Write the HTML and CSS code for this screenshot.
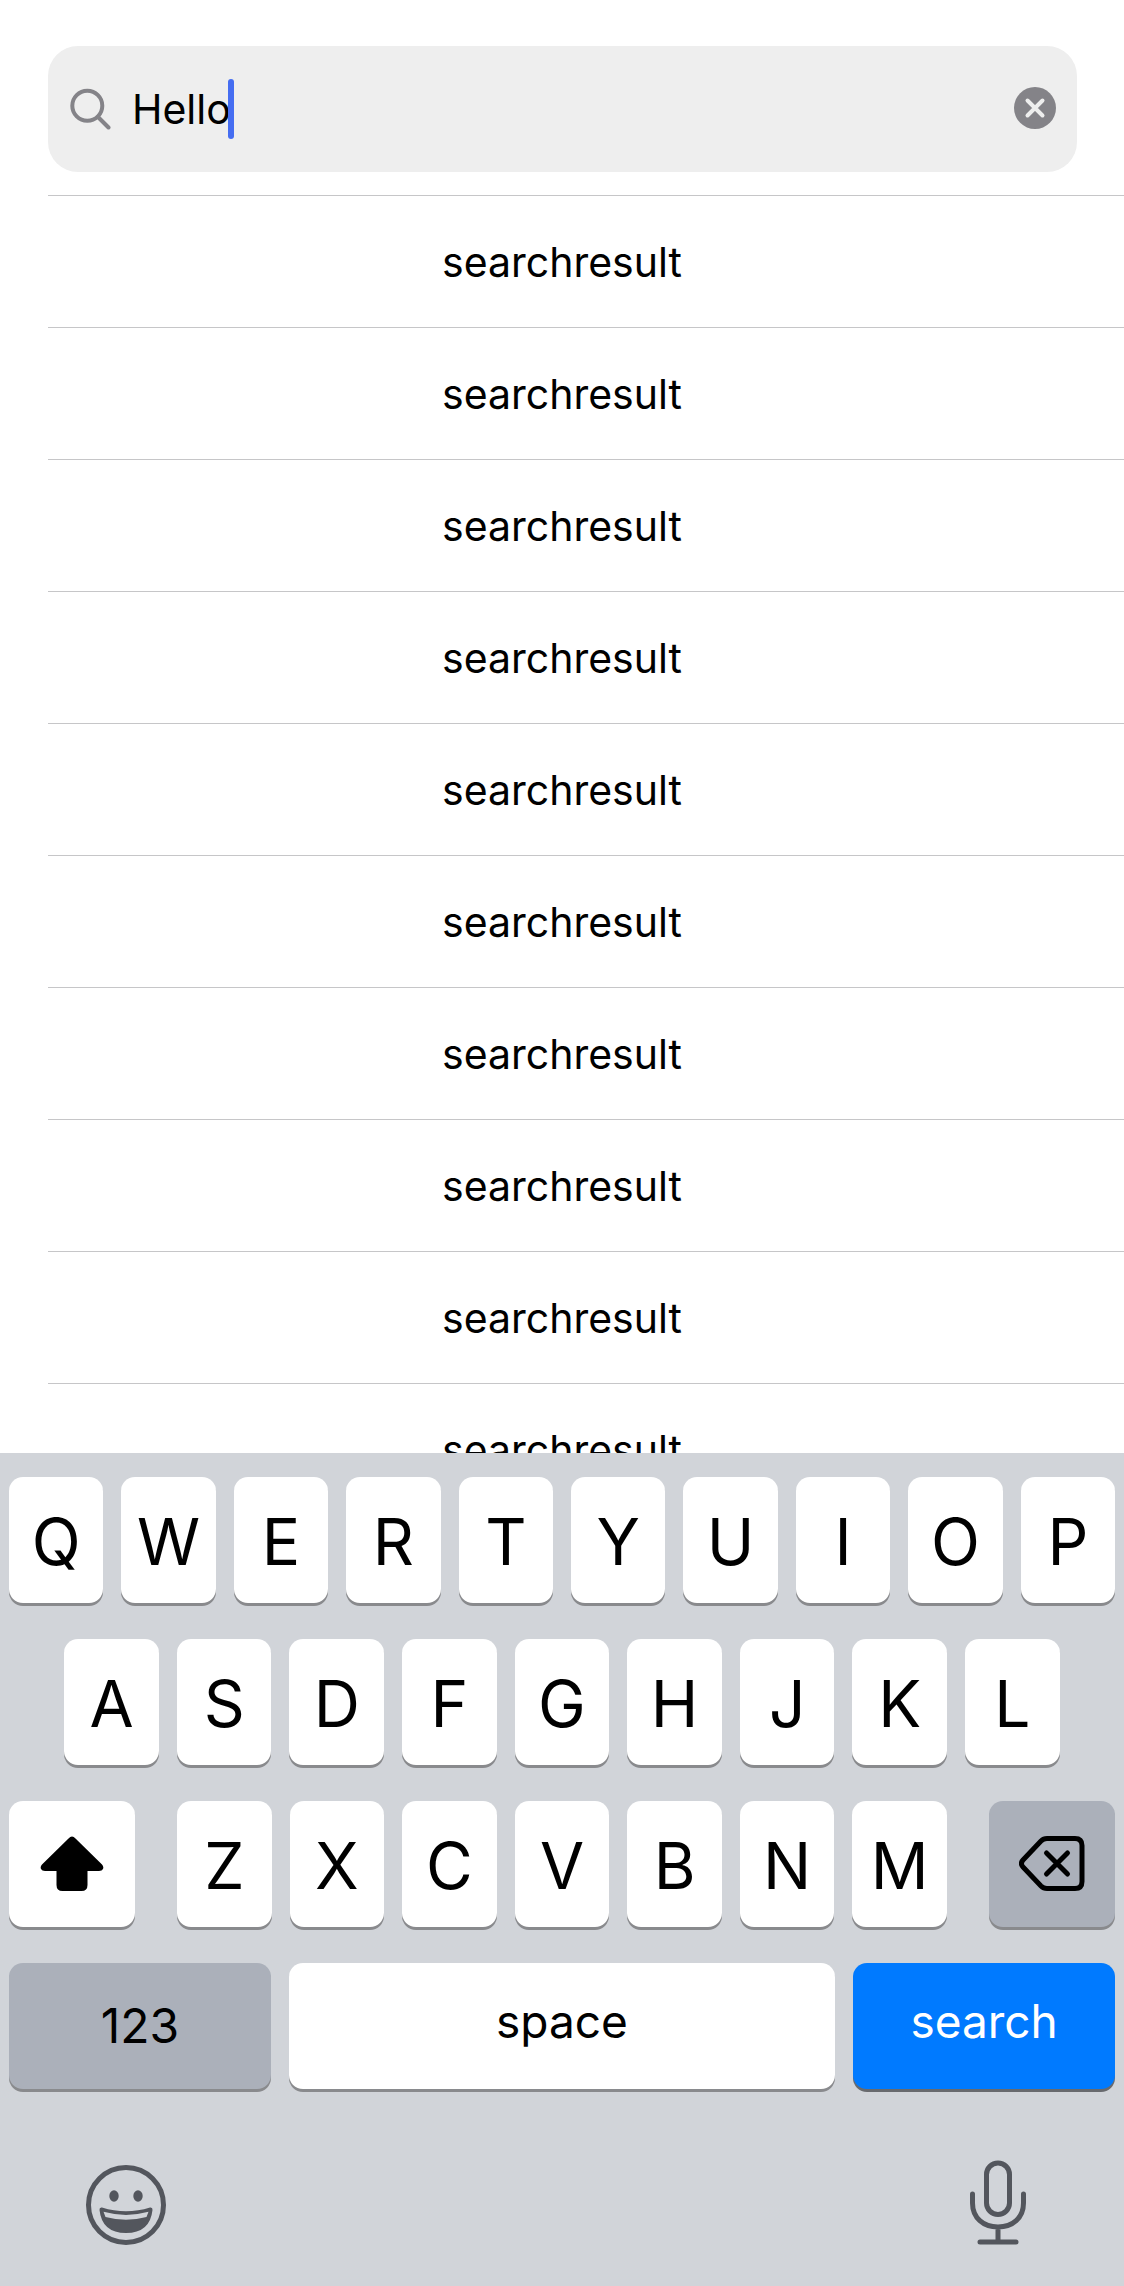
FILE: index.html
```html
<!DOCTYPE html>
<html lang="en">
<head>
<meta charset="utf-8">
<meta name="viewport" content="width=device-width, initial-scale=1">
<title>Search</title>
<link rel="stylesheet" href="styles.css">
</head>
<body>
<div class="app">
  <form class="search" role="search">
    <label class="search-label" for="query" aria-label="Search">
      <svg class="search-icon" viewBox="0 0 42 42" aria-hidden="true"><circle cx="17.300" cy="17.700" r="15"/><path d="M28 29 38.500 39.500"/></svg>
    </label>
    <input class="search-input" id="query" type="text" value="Hello" autocomplete="off" spellcheck="false">
    <span class="caret"></span>
    <button class="clear" type="button" aria-label="Clear">
      <svg viewBox="0 0 42 42" aria-hidden="true"><circle cx="21" cy="21" r="21"/><path d="M13.500 13.500 28.500 28.500M28.500 13.500 13.500 28.500"/></svg>
    </button>
  </form>

  <ul class="results">
    <li class="result">searchresult</li>
    <li class="result">searchresult</li>
    <li class="result">searchresult</li>
    <li class="result">searchresult</li>
    <li class="result">searchresult</li>
    <li class="result">searchresult</li>
    <li class="result">searchresult</li>
    <li class="result">searchresult</li>
    <li class="result">searchresult</li>
    <li class="result">searchresult</li>
  </ul>

  <div class="keyboard">
    <div class="row">
      <button class="key" type="button">Q</button>
      <button class="key" type="button">W</button>
      <button class="key" type="button">E</button>
      <button class="key" type="button">R</button>
      <button class="key" type="button">T</button>
      <button class="key" type="button">Y</button>
      <button class="key" type="button">U</button>
      <button class="key" type="button">I</button>
      <button class="key" type="button">O</button>
      <button class="key" type="button">P</button>
    </div>
    <div class="row row-inset">
      <button class="key" type="button">A</button>
      <button class="key" type="button">S</button>
      <button class="key" type="button">D</button>
      <button class="key" type="button">F</button>
      <button class="key" type="button">G</button>
      <button class="key" type="button">H</button>
      <button class="key" type="button">J</button>
      <button class="key" type="button">K</button>
      <button class="key" type="button">L</button>
    </div>
    <div class="row-shift">
      <button class="key key-icon" type="button" aria-label="Shift">
        <svg class="shift-icon" viewBox="0 0 64 56" aria-hidden="true"><path d="M28.500 2.500Q32-1.500 35.500 2.500L62 28.500Q64 30.700 63 33Q62 35 59 35H47.500V49Q47.500 55 41.500 55H22.500Q16.500 55 16.500 49V35H5Q2 35 1 33Q0 30.700 2 28.500Z"/></svg>
      </button>
      <div class="row">
        <button class="key" type="button">Z</button>
        <button class="key" type="button">X</button>
        <button class="key" type="button">C</button>
        <button class="key" type="button">V</button>
        <button class="key" type="button">B</button>
        <button class="key" type="button">N</button>
        <button class="key" type="button">M</button>
      </div>
      <button class="key key-icon key-gray" type="button" aria-label="Delete">
        <svg class="delete-icon" viewBox="0 0 66 56" aria-hidden="true"><path d="M28 2.500H56Q63 2.500 63 9.500V45.500Q63 52.500 56 52.500H28Q24.500 52.500 22 50L4 31Q.800 27.500 4 24L22 5Q24.500 2.500 28 2.500Z"/><path d="M27.500 17 48.500 38M48.500 17 27.500 38"/></svg>
      </button>
    </div>
    <div class="row-space">
      <button class="key key-word key-gray key-digits" type="button">123</button>
      <button class="key key-word" type="button">space</button>
      <button class="key key-word key-blue" type="button">search</button>
    </div>
    <div class="tools">
      <button class="tool" type="button" aria-label="Emoji">
        <svg class="emoji-icon" viewBox="0 0 82 82" aria-hidden="true"><circle class="line" cx="41" cy="41" r="37.500"/><ellipse cx="29" cy="32" rx="4.700" ry="5.700"/><ellipse cx="53" cy="32" rx="4.700" ry="5.700"/><path d="M17 43.500Q41 51 65 43.500Q67.800 43 67.500 46Q65 69 41 69Q17 69 14.500 46Q14.200 43 17 43.500ZM18.500 47.800 20.500 53Q41 58.500 61.500 53L63.500 47.800Q41 54 18.500 47.800Z" fill-rule="evenodd"/></svg>
      </button>
      <button class="tool" type="button" aria-label="Dictate">
        <svg class="mic-icon" viewBox="0 0 58 86" aria-hidden="true"><rect x="17.500" y="3" width="23" height="51.500" rx="11.500"/><path d="M3.500 34V43C3.500 58 14.500 67 29 67S54.500 58 54.500 43V34M29 67V82M11 82H47"/></svg>
      </button>
    </div>
  </div>
</div>
</body>
</html>
```
FILE: styles.css
```css
* {
  box-sizing: border-box;
}

body {
  margin: 0;
  background: #fff;
  color: #000;
  font-family: Inter, "Liberation Sans", sans-serif;
}

button {
  margin: 0;
  padding: 0;
  border: 0;
  background: none;
  color: inherit;
  font: inherit;
}

svg {
  display: block;
}

.app {
  display: flex;
  flex-direction: column;
  height: 100vh;
  overflow: hidden;
}

.search {
  display: flex;
  flex: none;
  align-items: center;
  height: 126px;
  margin: 46px 47px 23px 48px;
  padding: 0 21px 0 22px;
  border-radius: 30px;
  background: #eee;
}

.search-icon {
  width: 42px;
  height: 42px;
  fill: none;
  stroke: #848388;
  stroke-width: 4;
  stroke-linecap: round;
}

.search-input {
  field-sizing: content;
  min-width: 0;
  margin: 0 0 0 20px;
  padding: 0;
  border: 0;
  outline: 0;
  background: none;
  color: inherit;
  font: inherit;
  font-size: 41px;
  line-height: 60px;
}

.caret {
  width: 6px;
  height: 60px;
  margin-left: -3px;
  border-radius: 3px;
  background: #456df1;
}

.clear {
  width: 42px;
  height: 42px;
  margin-bottom: 2px;
  margin-left: auto;
  fill: #848388;
  stroke: #eee;
  stroke-width: 4;
  stroke-linecap: round;
}

.clear circle {
  stroke: none;
}

.results {
  flex: 1;
  min-height: 0;
  margin: 0;
  padding: 0 0 0 48px;
  overflow: hidden;
  list-style: none;
}

.result {
  height: 132px;
  padding-right: 48px;
  border-top: 1px solid #c6c6c8;
  font-size: 41px;
  line-height: 133px;
  text-align: center;
}

.keyboard {
  display: flex;
  flex: none;
  flex-direction: column;
  gap: 36px;
  padding: 24px 9px 40px;
  background: #d1d4d9;
}

.row {
  display: flex;
  gap: 18px;
}

.row-inset {
  padding: 0 5%;
}

.row-shift {
  display: grid;
  grid-template-columns: 126fr 770fr 126fr;
  gap: 42px;
}

.row-space {
  display: grid;
  grid-template-columns: 262fr 547fr 262fr;
  gap: 18px;
}

.key {
  display: flex;
  flex: 1 1 0;
  align-items: center;
  justify-content: center;
  min-width: 0;
  height: 126px;
  padding-top: 4px;
  border-radius: 14px;
  background: #fff;
  box-shadow: 0 3px 0 #898a8d;
  font-size: 64px;
  line-height: 1;
}

.key-icon {
  padding: 0;
}

.key-gray {
  background: #abb0ba;
}

.key-word {
  padding: 0 0 10px;
  font-size: 46px;
}

.key-digits {
  padding: 0;
  font-size: 48px;
}

.key-blue {
  background: #007aff;
  box-shadow: 0 3px 0 #686a6e;
  color: #fff;
}

.shift-icon {
  width: 64px;
  height: 56px;
}

.delete-icon {
  width: 66px;
  height: 56px;
  fill: none;
  stroke: #000;
  stroke-width: 5;
  stroke-linecap: round;
  stroke-linejoin: round;
}

.tools {
  display: flex;
  align-items: end;
  justify-content: space-between;
  padding: 35px 88px 0 76px;
}

.tool {
  color: #53565d;
}

.emoji-icon {
  width: 82px;
  height: 82px;
  fill: currentColor;
}

.emoji-icon .line {
  fill: none;
  stroke: currentColor;
  stroke-width: 5;
}

.mic-icon {
  width: 58px;
  height: 86px;
  fill: none;
  stroke: currentColor;
  stroke-width: 5;
  stroke-linecap: round;
}
```
